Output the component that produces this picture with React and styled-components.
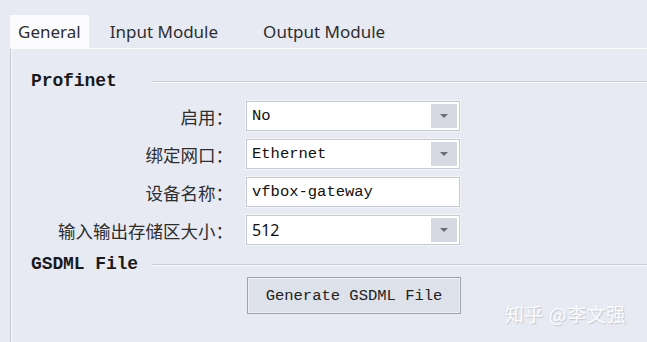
import React from 'react';
import styled, { createGlobalStyle } from 'styled-components';

const GlobalStyle = createGlobalStyle`
  html, body {
    margin: 0;
    padding: 0;
    background: #e7eaf3;
    overflow: hidden;
  }
`

const Window = styled.div`
  position: relative;
  width: 647px;
  height: 342px;
  background: #e7eaf3;
  overflow: hidden;
  font-family: "Noto Sans", "Noto Sans CJK SC", sans-serif;
`
const TabBar = styled.div`
  display: flex;
  align-items: flex-end;
  height: 48px;
  padding-left: 10px;
  box-sizing: border-box;
`
const Tab = styled.div`
  height: 33px;
  display: flex;
  align-items: center;
  box-sizing: border-box;
  padding: ${props => props.pad || '0 8px'};
  font-size: 17px;
  color: #2e2e2e;
  background: ${props => (props.active ? '#fbfbfd' : 'transparent')};
`
const Panel = styled.div`
  margin-left: 10px;
  height: 300px;
  border-top: 1px solid #fafbfd;
  border-left: 1px solid #c4c7cf;
  box-shadow: inset 1px 0 0 #f7f8fb;
  padding: 21px 0 0 20px;
`
const SectionHeader = styled.div`
  display: grid;
  grid-template-columns: 121px 1fr;
  align-items: center;
  height: 22px;
`
const SectionTitle = styled.div`
  font-family: "Liberation Mono", monospace;
  font-weight: bold;
  font-size: 18px;
  color: #1a1a1a;
  letter-spacing: -0.1px;
`
const SectionLine = styled.div`
  height: 1px;
  background: #c9ccd3;
  box-shadow: 0 1px 0 #f8f9fb;
`
const Form = styled.div`
  display: grid;
  grid-template-columns: 202px 214px;
  column-gap: 13px;
  row-gap: 8px;
  margin-top: 9px;
  margin-bottom: 8px;
`
const Label = styled.div`
  height: 30px;
  display: flex;
  align-items: center;
  justify-content: flex-end;
  font-family: "Noto Sans CJK SC", sans-serif;
  font-size: 17.5px;
  color: #2e2e2e;
`
const Field = styled.div`
  position: relative;
  height: 30px;
  box-sizing: border-box;
  display: flex;
  align-items: center;
  background: #fff;
  border: 1px solid #c6cad2;
  box-shadow: 0 0 0 1px #f3f4f8;
  padding-left: 5px;
  font-family: ${props => (props.sans ? '"Noto Sans", sans-serif' : '"Liberation Mono", monospace')};
  font-size: ${props => (props.sans ? '16px' : '15.5px')};
  color: #111;
`
const DropButton = styled.div`
  position: absolute;
  right: 2px;
  top: 2px;
  bottom: 2px;
  width: 26px;
  background: #d6d9e1;
  display: flex;
  align-items: center;
  justify-content: center;
`
const Arrow = styled.div`
  width: 0;
  height: 0;
  border-left: 4px solid transparent;
  border-right: 4px solid transparent;
  border-top: 4px solid #6a6d74;
`
const ButtonRow = styled.div`
  padding-left: 216px;
  margin-top: 2px;
`
const Button = styled.button`
  width: 214px;
  height: 37px;
  background: #dde1ea;
  border: 1px solid #9fa3ab;
  box-shadow: inset 0 0 0 1px #eef0f5;
  font-family: "Liberation Mono", monospace;
  font-size: 15.5px;
  color: #222;
  padding: 0;
`
const Watermark = styled.div`
  position: absolute;
  left: 505px;
  top: 300px;
  font-family: "Noto Sans CJK SC", sans-serif;
  font-size: 19px;
  color: rgba(255, 255, 255, 0.95);
  text-shadow: 1px 1px 1px rgba(150, 155, 170, 0.45);
  letter-spacing: 0.5px;
`

const rows = [
  { label: '启用：', value: 'No', select: true },
  { label: '绑定网口：', value: 'Ethernet', select: true },
  { label: '设备名称：', value: 'vfbox-gateway', select: false },
  { label: '输入输出存储区大小：', value: '512', select: true, sans: true },
]

export default function App() {
  return (
    <Window>
      <GlobalStyle />
      <TabBar>
        <Tab active>General</Tab>
        <Tab pad="0 22px 0 21px">Input Module</Tab>
        <Tab pad="0 23px">Output Module</Tab>
      </TabBar>
      <Panel>
        <SectionHeader>
          <SectionTitle>Profinet</SectionTitle>
          <SectionLine />
        </SectionHeader>
        <Form>
          {rows.map(r => (
            <React.Fragment key={r.label}>
              <Label>{r.label}</Label>
              <Field sans={r.sans}>
                {r.value}
                {r.select && (
                  <DropButton>
                    <Arrow />
                  </DropButton>
                )}
              </Field>
            </React.Fragment>
          ))}
        </Form>
        <SectionHeader>
          <SectionTitle>GSDML File</SectionTitle>
          <SectionLine />
        </SectionHeader>
        <ButtonRow>
          <Button>Generate GSDML File</Button>
        </ButtonRow>
      </Panel>
      <Watermark>知乎 @李文强</Watermark>
    </Window>
  )
}
